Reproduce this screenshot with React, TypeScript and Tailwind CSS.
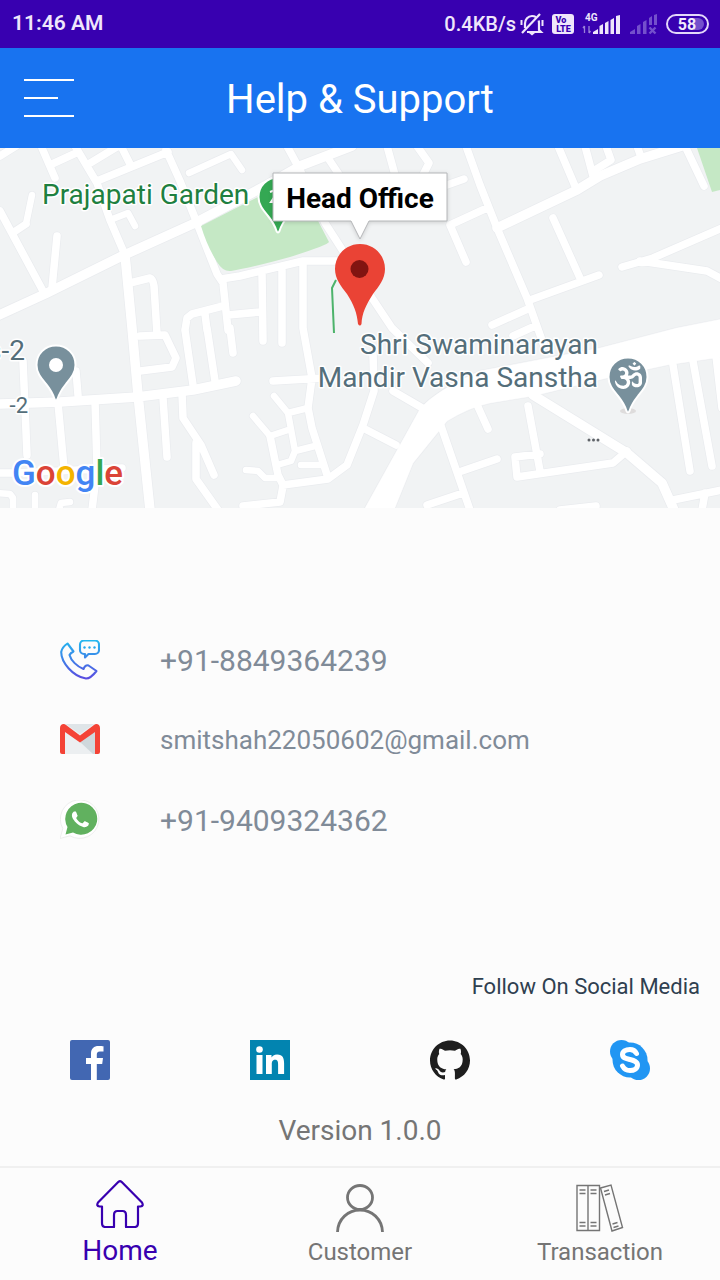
import type { ReactNode } from "react";
import { FaOm } from "react-icons/fa";
import { SiGithub } from "react-icons/si";

function MutedBell() {
  return (
    <svg className="h-6 w-6" viewBox="0 0 24 24" fill="none" stroke="#efe6fb" strokeWidth="2.200" aria-hidden="true">
      <path d="M5 16V11.500C5 7.500 8 4 12 4c1.500 0 2.800 .4 4 1.200M18.700 8.500c.2 1 .3 2 .3 3V18l2 2H7" />
      <path d="M2 21 20 2" />
      <path d="M1.500 8v5M22.500 8v6" strokeWidth="2" />
      <path d="M9 21h6l-3 2.500z" fill="#efe6fb" stroke="none" />
    </svg>
  );
}

function VolteBadge() {
  return (
    <svg className="h-5 w-[22px]" viewBox="0 0 22 20" aria-hidden="true">
      <rect width="22" height="20" rx="3" fill="#efe6fb" />
      <g fill="#3800b0" fontFamily="Roboto, sans-serif" fontWeight="900" fontSize="9" textAnchor="middle">
        <text x="9" y="9">Vo</text>
        <text x="11.500" y="18">LTE</text>
      </g>
    </svg>
  );
}

function Signal4G() {
  return (
    <svg className="h-6 w-10" viewBox="0 0 40 24" fill="#efe6fb" aria-hidden="true">
      <text x="3" y="9" fontFamily="Roboto, sans-serif" fontWeight="700" fontSize="10">4G</text>
      <path d="M2.500 21v-7M7 14v7M1 16l1.500-2M8.500 19 7 21" stroke="#9a80d8" strokeWidth="1.300" />
      <path d="M11 22v-2l5-3v5zM17.500 22v-8l3.500-2v10zM23 22v-11l3.500-2v13zM28.500 22V8l3.500-2v16zM34 22V4l4-1v19z" />
    </svg>
  );
}

function SignalNone() {
  return (
    <svg className="h-6 w-[28px]" viewBox="0 0 28 24" fill="#7450cc" aria-hidden="true">
      <path d="M0 22v-2l5-3v5zM7 22v-8l3.500-2v10zM13 22V10l3.500-2v14zM19 13V6l3-2v9zM24 13V3l3-1v11z" />
      <path d="m19.500 15.500 6 6m0-6-6 6" stroke="#7450cc" strokeWidth="2.400" />
    </svg>
  );
}

function Battery() {
  return (
    <svg className="h-5 w-11" viewBox="0 0 44 20" aria-hidden="true">
      <rect x="1" y="1" width="41" height="18" rx="9" fill="none" stroke="#e4d8fa" strokeWidth="2" />
      <path d="M28 4h4a6 6 0 0 1 0 12h-4z" fill="#7450cc" />
      <text x="21" y="16" textAnchor="middle" fill="#f3ecfd" fontFamily="Roboto, sans-serif" fontWeight="700" fontSize="16">58</text>
    </svg>
  );
}

const roads8 = [
  "M0 63 43 143", "M26 76 14 84", "M57 88 52 140", "M42 0 55 30", "M50 17 76 5", "M0 8 16 -2",
  "M75 -2 97 35 110 72 125 107", "M87 17 120 -3", "M121 -2 131 18", "M97 33 168 4",
  "M166 2 180 33 197 75 217 126 223 135 228 182", "M130 135 150 130Q153 131 154 138L157 186",
  "M185 182 187 170 192 166 223 158", "M205 166 207 182", "M228 167 260 164",
  "M221 131 240 128 303 113 337 113", "M262 125 263 193", "M282 120 282 195",
  "M303 115 303 180 312 230 308 260 312 280 328 330", "M287 -2 300 22 325 75 343 103 372 150 392 180 428 215",
  "M393 243 424 261", "M273 233 325 230", "M328 10 340 28",
  "M270 288 278 327 283 337 328 331 347 317 363 277 374 243 373 205",
  "M283 338 280 354 243 358", "M363 280 396 297",
  "M440 275 470 362", "M462 323 497 311", "M427 357 463 345", "M474 250 488 281",
  "M528 258 540 323", "M540 306 515 309 517 329 613 315 627 303",
  "M673 352 722 342", "M705 345 702 362", "M673 217 690 323", "M693 213 712 318", "M716 208 722 260",
  "M560 362 596 358", "M492 177 530 160", "M513 188 535 178", "M466 -2 480 37 497 80 527 150 544 198",
  "M447 37 464 31", "M487 60 450 77 466 114", "M387 -2 395 27", "M417 -2 429 15 423 27",
  "M558 -2 575 38", "M585 -2 593 28", "M595 22 611 12 606 -2", "M637 -2 641 9",
  "M553 70 580 130", "M530 152 599 127", "M685 -2 704 38", "M622 119 653 110 722 80",
  "M640 113 667 117 707 123 722 131", "M23 213 27 307", "M76 223 78 247", "M58 255 64 320",
  "M95 253 97 320 92 362", "M163 250 167 309", "M182 245 183 270 201 297 214 327",
  "M196 295 196 331 218 362", "M185 182 193 237", "M207 180 215 233", "M230 180 233 205",
  "M140 188 165 187 176 210 172 219 140 223", "M-2 325 14 325 122 320",
];

const roads7 = [
  "M32 47 26 76", "M189 25 231 6 242 22", "M110 72 128 65 135 78", "M274 248 288 265 308 260",
  "M288 265 295 303 315 298", "M253 268 270 288 288 282", "M295 303 291 313 277 317",
  "M301 317 322 317", "M246 322 258 323 265 330 278 330", "M-2 345 10 346 13 350 13 362",
  "M35 347 35 362", "M59 362 61 355 70 354",
];

const roads10 = [
  "M-3 168 45 146 122 108 195 75 265 38 300 18 352 -2", "M497 80 577 42 600 28 640 11 682 -2",
  "M125 107 132 180 138 247 150 362", "M-2 256 60 254 137 249 193 242 236 233",
  "M533 247 627 305 662 335 674 362",
];

const highway =
  "M364 362 420 261Q435 243 480 223L600 200 677 180 722 171V209L667 217 607 230 533 248 490 255Q470 259 447 273L413 315 394 362Z";

function Roads() {
  return (
    <>
      {[true, false].map((edge) => (
        <g
          key={edge ? "edge" : "fill"}
          fill="none"
          stroke={edge ? "#eaecef" : "#fff"}
          strokeLinecap="round"
          strokeLinejoin="round"
        >
          <path d={roads7.join("")} strokeWidth={edge ? 8 : 6.5} />
          <path d={roads8.join("")} strokeWidth={edge ? 9 : 7.5} />
          <path d={roads10.join("")} strokeWidth={edge ? 11 : 9.5} />
          <path d={highway} strokeWidth={edge ? 2 : 0.5} fill={edge ? "#eaecef" : "#fff"} />
        </g>
      ))}
    </>
  );
}

const smallPin = "M0-19.500C-11-19.500-19.500-11-19.500 0C-19.500 8-15 13-10 19C-6 24-3 29-1.500 34Q0 37 1.500 34C3 29 6 24 10 19C15 13 19.500 8 19.500 0C19.500-11 11-19.500 0-19.500Z";

function OfficeMap() {
  return (
    <svg
      className="block h-[360px] w-full"
      viewBox="0 0 720 360"
      preserveAspectRatio="xMidYMid slice"
      role="img"
      aria-label="Map of the head office"
    >
      <rect width="720" height="360" fill="#f1f3f4" />
      <Roads />
      <path d="M201 78 240 58 270 43 300 38 329 94Q328 97 290 109 250 120 231 123 223 124 217 114 207 98 201 78Z" fill="#c5e8c5" />
      <path d="M697 0H720V42L712 44Z" fill="#c5e8c5" />
      <path d="M336 132 332 140 334 185" fill="none" stroke="#4db36b" strokeWidth="2" />

      <g strokeLinejoin="round" stroke="#fff" strokeWidth="3" paintOrder="stroke" fontFamily="Roboto, sans-serif" fontSize="28">
        <text x="42" y="56" fill="#1e8040">Prajapati Garden</text>
        <g fill="#546e7a">
          <text x="598" y="206" textAnchor="end">Shri Swaminarayan</text>
          <text x="598" y="239" textAnchor="end">Mandir Vasna Sanstha</text>
          <text x="25" y="212" textAnchor="end">s-2</text>
          <text x="28" y="265" textAnchor="end" fontSize="22">-2</text>
        </g>
      </g>
      <g fill="#5f6368">
        <circle cx="589" cy="292" r="1.500" />
        <circle cx="593.500" cy="292" r="1.500" />
        <circle cx="598" cy="292" r="1.500" />
      </g>

      <ellipse cx="628" cy="263" rx="8" ry="3" fill="#dedcdc" />
      <g stroke="#fff" strokeWidth="2">
        <path d={smallPin} transform="translate(56 217)" fill="#78909c" />
        <path d={smallPin} transform="translate(628 229)" fill="#78909c" />
        <path d={smallPin} transform="translate(278 49)" fill="#34a853" />
      </g>
      <circle cx="56" cy="217" r="7" fill="#fff" />
      <FaOm x={615} y={214} size={27} color="#fff" />
      <path d="m270 44 5-2v6l-4 6h5" fill="none" stroke="#fff" strokeWidth="2" />

      <path
        d="M273 25H447V73H369L360 91 351 73H273Z"
        fill="#fff"
        stroke="#b4b6b8"
        strokeWidth="1"
        className="drop-shadow-sm"
      />
      <text x="360" y="60" textAnchor="middle" fontFamily="Roboto, sans-serif" fontSize="28" fontWeight="700">Head Office</text>
      <path
        d="M360 96C346 96 335 107 335 121C335 131 341 138 347 146C354 157 357 165 358 176Q360 179 361.500 176C362 165 366 157 373 146C379 138 385 131 385 121C385 107 374 96 360 96Z"
        fill="#ea4335"
      />
      <circle cx="359.500" cy="121" r="9" fill="#811411" />

      <text
        x="12"
        y="337"
        fontFamily="Roboto, sans-serif"
        fontSize="35"
        fontWeight="500"
        stroke="#fff"
        strokeWidth="4"
        strokeLinejoin="round"
        paintOrder="stroke"
      >
        <tspan fill="#4285f4">G</tspan>
        <tspan fill="#db4437">o</tspan>
        <tspan fill="#f4b400">o</tspan>
        <tspan fill="#4285f4">g</tspan>
        <tspan fill="#34a853">l</tspan>
        <tspan fill="#db4437">e</tspan>
      </text>
    </svg>
  );
}

function CallIcon() {
  return (
    <svg className="size-10" viewBox="0 0 40 40" fill="none" aria-hidden="true">
      <defs>
        <linearGradient id="call" gradientUnits="userSpaceOnUse" x1="20" y1="0" x2="20" y2="40">
          <stop offset="0" stopColor="#22bcf0" />
          <stop offset="1" stopColor="#5a4be0" />
        </linearGradient>
      </defs>
      <g stroke="url(#call)" strokeWidth="2.100" strokeLinejoin="round" strokeLinecap="round" transform="translate(0 -1)">
        <path d="M7.500 4.500 13.500 12.500Q10.500 14 9.500 16C11 21.500 17 27.500 23.500 30C24.500 27.500 26.500 25.500 28.500 26.500L36.500 32C33 36.500 30 39.500 26 39.500C13 37.500 1.200 23.500 1.200 13C1.700 9.500 4.500 6.500 7.500 4.500Z" />
        <path d="M24 1.500h11a4 4 0 0 1 4 4v5.500a4 4 0 0 1-4 4h-6.500L25 18.500V15h-1a4 4 0 0 1-4-4v-5.500A4 4 0 0 1 24 1.500Z" />
      </g>
      <g fill="#22a8ee">
        <circle cx="24.500" cy="7.500" r="1.200" />
        <circle cx="29.500" cy="7.500" r="1.200" />
        <circle cx="34.500" cy="7.500" r="1.200" />
      </g>
    </svg>
  );
}

function GmailIcon() {
  return (
    <svg className="h-10 w-10" viewBox="0 0 40 40" aria-hidden="true">
      <path d="M3 4h34v30H3z" fill="#eceff1" />
      <path d="m20 22 15-11v23l-2 0z" fill="#cfd8dc" />
      <path d="m6 4 14 10L34 4z" fill="#dfe5e8" />
      <path d="M0 8C0 4.500 3.500 3 6 5l14 10.500L34 5c2.500-2 6-.5 6 3V32q0 2-2 2h-3V12L20 22.500 5 12v22H2q-2 0-2-2z" fill="#f44336" />
    </svg>
  );
}

function WhatsAppIcon() {
  return (
    <svg className="size-10" viewBox="0 0 40 40" aria-hidden="true">
      <path d="M0 38.500 2.800 28.500A19.300 19.300 0 1 1 10 35.800Z" fill="#fff" stroke="#eeeeee" />
      <path d="M5.500 34.500 7.500 27A16 16 0 1 1 13 32.500Z" fill="#61b15f" />
      <path
        transform="translate(3.500 2.500) scale(1.400)"
        fill="#fff"
        d="M17.472 14.382c-.297-.149-1.758-.867-2.030-.967-.273-.099-.471-.148-.670.150-.197.297-.767.966-.940 1.164-.173.199-.347.223-.644.075-.297-.150-1.255-.463-2.390-1.475-.883-.788-1.480-1.761-1.653-2.059-.173-.297-.018-.458.130-.606.134-.133.298-.347.446-.520.149-.174.198-.298.298-.497.099-.198.050-.371-.025-.520-.075-.149-.669-1.612-.916-2.207-.242-.579-.487-.500-.669-.510-.173-.008-.371-.010-.570-.010-.198 0-.520.074-.792.372-.272.297-1.040 1.016-1.040 2.479 0 1.462 1.065 2.875 1.213 3.074.149.198 2.096 3.200 5.077 4.487.709.306 1.262.489 1.694.625.712.227 1.360.195 1.871.118.571-.085 1.758-.719 2.006-1.413.248-.694.248-1.289.173-1.413-.074-.124-.272-.198-.570-.347"
      />
    </svg>
  );
}

function FacebookIcon() {
  return (
    <svg className="size-10" viewBox="0 0 40 40" aria-hidden="true">
      <rect width="40" height="40" rx="2" fill="#4267b2" />
      <path d="M21 40V24h-5v-6h5v-4.500C21 8.500 24 6 28.500 6c2.200 0 4 .2 5 .3v5.200h-3.500c-2.700 0-3.200 1.300-3.200 3.200V18H33l-.8 6h-5.400v16z" fill="#fff" />
    </svg>
  );
}

function LinkedInIcon() {
  return (
    <svg className="size-10" viewBox="0 0 40 40" aria-hidden="true">
      <rect width="40" height="40" fill="#0284b0" />
      <g fill="#fff">
        <circle cx="9.500" cy="9.500" r="3.300" />
        <rect x="6.500" y="15" width="6" height="19" />
        <path d="M16 15h5.500v2.600c.8-1.500 2.700-3 5.600-3 5.900 0 7 3.900 7 9V34h-6v-9.200c0-2.200 0-5-3-5s-3.300 2.400-3.300 4.900V34H16z" />
      </g>
    </svg>
  );
}

function SkypeIcon() {
  return (
    <svg className="size-10" viewBox="0 0 40 40" aria-hidden="true">
      <g fill="#2196f3">
        <circle cx="20" cy="20" r="17.500" />
        <circle cx="11.500" cy="11.500" r="11.500" />
        <circle cx="28.500" cy="28.500" r="11.500" />
      </g>
      <path
        d="M26.500 13.500C25 10.500 23 9.500 20 9.500C15.500 9.500 12.500 11.500 12.500 14.500C12.500 18 16 18.500 20 19.500C24 20.500 27.500 21.500 27.500 25C27.500 28.500 24 30.500 20 30.500C16 30.500 14 29 12.500 26"
        fill="none"
        stroke="#fff"
        strokeWidth="5"
        strokeLinecap="round"
      />
    </svg>
  );
}

function HomeIcon() {
  return (
    <svg className="size-12" viewBox="0 0 48 48" fill="none" stroke="currentColor" strokeWidth="2.200" strokeLinejoin="round" aria-hidden="true">
      <path d="M22.500 1.800Q24 .5 25.500 1.800L46 22.500Q48 26 44.500 26.500H42V43Q42 47 38.500 47H30V35Q30 31 26.500 31H21.500Q18 31 18 35V47H9.500Q6 47 6 43V26.500H3.500Q0 26 2 22.500Z" />
    </svg>
  );
}

function CustomerIcon() {
  return (
    <svg className="size-12" viewBox="0 0 48 48" fill="none" stroke="currentColor" strokeWidth="2.800" aria-hidden="true">
      <ellipse cx="24" cy="13.500" rx="12.500" ry="12" />
      <path d="M1.500 48C2 35 12 26 24 26s22 9 22.500 22" />
    </svg>
  );
}

function TransactionIcon() {
  return (
    <svg className="size-12" viewBox="0 0 48 48" fill="none" stroke="currentColor" strokeWidth="1.400" aria-hidden="true">
      <path d="M1 1.500h22.500v45H1zM12 1.500v45" />
      <path d="M24.500 4 35 1 46.500 43.500 36 47z" />
      <path d="M3.500 6h6M3.500 9.500h6M3.500 38.500h6M3.500 42h6M14.500 6h6M14.500 9.500h6M14.500 38.500h6M14.500 42h6M28 7.500l5-1.500M29 11l5-1.500M36.500 40l5-1.500M37.500 43.500l5-1.500" />
    </svg>
  );
}

const contacts: { href: string; label: string; size: string; icon: ReactNode }[] = [
  { href: "tel:+918849364239", label: "+91-8849364239", size: "text-[30px]", icon: <CallIcon /> },
  { href: "mailto:smitshah22050602@gmail.com", label: "smitshah22050602@gmail.com", size: "text-[26px]", icon: <GmailIcon /> },
  { href: "https://wa.me/919409324362", label: "+91-9409324362", size: "text-[30px]", icon: <WhatsAppIcon /> },
];

const socials: { name: string; href: string; icon: ReactNode }[] = [
  { name: "Facebook", href: "#facebook", icon: <FacebookIcon /> },
  { name: "LinkedIn", href: "#linkedin", icon: <LinkedInIcon /> },
  { name: "GitHub", href: "#github", icon: <SiGithub className="size-10 text-[#1e1e1e]" /> },
  { name: "Skype", href: "#skype", icon: <SkypeIcon /> },
];

export default function App() {
  return (
    <div className="flex min-h-screen flex-col bg-[#fcfcfc] font-['Roboto',sans-serif]">
      <div className="flex h-12 items-center justify-between bg-[#3800b0] pr-2.5 pl-3 font-medium text-[#efe6fb]">
        <span className="text-[21px] font-semibold">11:46 AM</span>
        <div className="flex items-center gap-2 text-xl">
          <div className="flex items-center gap-1">
            <span>0.4KB/s</span>
            <MutedBell />
          </div>
          <VolteBadge />
          <Signal4G />
          <SignalNone />
          <Battery />
        </div>
      </div>

      <header className="grid h-[100px] grid-cols-[1fr_auto_1fr] items-center bg-[#1873f0] px-6 text-white">
        <button type="button" aria-label="Menu" className="flex w-[50px] flex-col gap-4">
          <span className="h-0.5 w-full bg-white" />
          <span className="h-0.5 w-[34px] bg-white" />
          <span className="h-0.5 w-full bg-white" />
        </button>
        <h1 className="pt-1 text-[40px] leading-[52px]">Help &amp; Support</h1>
      </header>

      <OfficeMap />

      <main className="flex flex-1 flex-col">
        <ul className="mt-28 flex flex-col">
          {contacts.map((c) => (
            <li key={c.href}>
              <a href={c.href} className="flex h-20 items-center gap-[60px] px-[60px] text-[#808b98]">
                {c.icon}
                <span className={c.size}>{c.label}</span>
              </a>
            </li>
          ))}
        </ul>
        <h2 className="mt-28 px-5 text-right text-[22px] leading-[30px] text-[#2f4050]">Follow On Social Media</h2>
        <div className="mt-[38px] grid grid-cols-4 justify-items-center">
          {socials.map((s) => (
            <a key={s.name} href={s.href} aria-label={s.name}>
              {s.icon}
            </a>
          ))}
        </div>
        <p className="mt-8 text-center text-[28px] leading-[38px] text-[#757575]">Version 1.0.0</p>
      </main>

      <nav className="grid h-[114px] grid-cols-3 border-t-2 border-[#f0f0f0] text-[#757575]">
        <a href="#home" aria-current="page" className="flex flex-col items-center gap-1 pt-3 text-[28px] leading-[38px] text-[#3800b0]">
          <HomeIcon />
          Home
        </a>
        <a href="#customer" className="flex flex-col items-center gap-1 pt-4 text-2xl">
          <CustomerIcon />
          Customer
        </a>
        <a href="#transaction" className="flex flex-col items-center gap-1 pt-4 text-2xl">
          <TransactionIcon />
          Transaction
        </a>
      </nav>
    </div>
  );
}
